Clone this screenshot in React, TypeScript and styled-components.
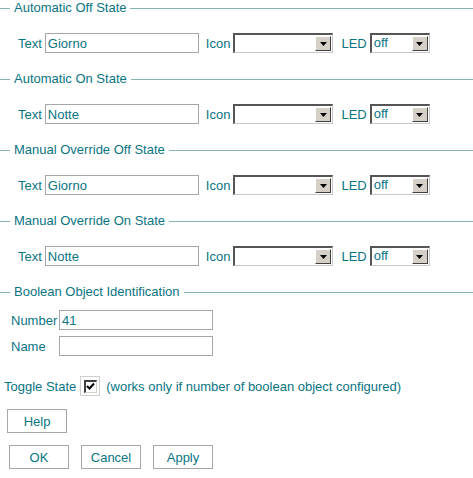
import React from 'react';
import styled, { createGlobalStyle } from 'styled-components';

const GlobalStyle = createGlobalStyle`
  html, body {
    margin: 0;
    padding: 0;
    background: #fff;
  }
  body {
    font-family: "Liberation Sans", Arial, sans-serif;
    font-size: 13px;
    color: #0a7483;
  }
`;

interface IStateGroup {
  title: string;
  text: string;
}

const stateGroups: IStateGroup[] = [
  { title: 'Automatic Off State', text: 'Giorno' },
  { title: 'Automatic On State', text: 'Notte' },
  { title: 'Manual Override Off State', text: 'Giorno' },
  { title: 'Manual Override On State', text: 'Notte' },
];

const ArrowIcon = () => (
  <svg width="7" height="4" viewBox="0 0 7 4">
    <polygon points="0,0 7,0 3.5,4" fill="#000" />
  </svg>
);

const CheckIcon = () => (
  <svg width="9" height="9" viewBox="0 0 9 9">
    <polyline points="1,4 3.5,6.5 8,1.5" fill="none" stroke="#000" strokeWidth="2" />
  </svg>
);

const FakeSelect = ({ width, value }: { width: number; value: string }) => (
  <SelectBox $width={width}>
    <SelectValue>{value}</SelectValue>
    <SelectArrow>
      <ArrowIcon />
    </SelectArrow>
  </SelectBox>
);

export default function App() {
  return (
    <Page>
      <GlobalStyle />
      {stateGroups.map((group, i) => (
        <Group key={i}>
          <Legend>{group.title}</Legend>
          <StateRow>
            <Label>Text</Label>
            <TextInput $width={154} defaultValue={group.text} />
            <Label $gapLeft={7}>Icon</Label>
            <FakeSelect width={100} value="" />
            <Label $gapLeft={8}>LED</Label>
            <FakeSelect width={60} value="off" />
          </StateRow>
        </Group>
      ))}

      <Group $top={10} $bottom={18}>
        <Legend>Boolean Object Identification</Legend>
        <IdBox>
          <IdRow>
            <IdLabel>Number</IdLabel>
            <TextInput $width={154} defaultValue="41" />
          </IdRow>
          <IdRow>
            <IdLabel>Name</IdLabel>
            <TextInput $width={154} defaultValue="" />
          </IdRow>
        </IdBox>
      </Group>

      <ToggleRow>
        <span>Toggle State</span>
        <CheckFrame>
          <CheckInner>
            <CheckIcon />
          </CheckInner>
        </CheckFrame>
        <span>(works only if number of boolean object configured)</span>
      </ToggleRow>

      <HelpRow>
        <Button>Help</Button>
      </HelpRow>

      <ButtonRow>
        <Button>OK</Button>
        <Button>Cancel</Button>
        <Button>Apply</Button>
      </ButtonRow>
    </Page>
  );
}

const Page = styled.div`
  width: 473px;
  display: flex;
  flex-direction: column;
`;

const Group = styled.fieldset<{ $top?: number; $bottom?: number }>`
  margin: 0;
  padding: ${(p) => p.$top ?? 17}px 0 ${(p) => p.$bottom ?? 18}px 0;
  border: none;
  border-top: 1px solid #86b3b3;
  min-width: 0;
`;

const Legend = styled.legend`
  margin-left: 10px;
  padding: 0 4px;
  line-height: 16px;
  font-size: 13px;
`;

const StateRow = styled.div`
  display: flex;
  align-items: center;
  padding-left: 18px;
  height: 20px;
`;

const Label = styled.span<{ $gapLeft?: number }>`
  margin-left: ${(p) => p.$gapLeft ?? 0}px;
  margin-right: 3px;
  white-space: nowrap;
`;

const TextInput = styled.input<{ $width: number }>`
  box-sizing: border-box;
  width: ${(p) => p.$width}px;
  height: 20px;
  margin: 0;
  padding: 0 2px;
  border: 1px solid #a6a6a6;
  font-family: "Liberation Sans", Arial, sans-serif;
  font-size: 13px;
  color: #0a7483;
  background: #fff;
  outline: none;
`;

const SelectBox = styled.div<{ $width: number }>`
  box-sizing: border-box;
  width: ${(p) => p.$width}px;
  height: 20px;
  display: flex;
  align-items: stretch;
  background: #fff;
  border-top: 2px solid #555;
  border-left: 2px solid #555;
  border-right: 1px solid #c8c8c8;
  border-bottom: 1px solid #c8c8c8;
`;

const SelectValue = styled.span`
  flex: 1;
  padding-left: 2px;
  line-height: 16px;
  font-size: 13px;
  color: #0a7483;
`;

const SelectArrow = styled.span`
  box-sizing: border-box;
  width: 16px;
  margin: 1px;
  display: flex;
  align-items: center;
  justify-content: center;
  background: #d4d0c8;
  border-top: 1px solid #fff;
  border-left: 1px solid #fff;
  border-right: 1px solid #404040;
  border-bottom: 1px solid #404040;
`;

const IdBox = styled.div`
  display: flex;
  flex-direction: column;
  gap: 6px;
  padding-left: 11px;
`;

const IdRow = styled.div`
  display: flex;
  align-items: center;
`;

const IdLabel = styled.span`
  width: 48px;
`;

const ToggleRow = styled.div`
  display: flex;
  align-items: center;
  gap: 4px;
  padding-left: 4px;
  margin-top: 2px;
  height: 20px;
`;

const CheckFrame = styled.span`
  box-sizing: border-box;
  width: 20px;
  height: 20px;
  display: flex;
  align-items: center;
  justify-content: center;
  border: 1px solid #cfcfcf;
  margin-right: 2px;
`;

const CheckInner = styled.span`
  box-sizing: border-box;
  width: 13px;
  height: 13px;
  display: flex;
  align-items: center;
  justify-content: center;
  background: #fff;
  border-top: 2px solid #404040;
  border-left: 2px solid #404040;
  border-right: 1px solid #d4d0c8;
  border-bottom: 1px solid #d4d0c8;
`;

const HelpRow = styled.div`
  display: flex;
  padding-left: 7px;
  margin-top: 13px;
`;

const ButtonRow = styled.div`
  display: flex;
  gap: 12px;
  padding-left: 9px;
  margin-top: 12px;
`;

const Button = styled.button`
  box-sizing: border-box;
  width: 60px;
  height: 24px;
  margin: 0;
  padding: 0;
  background: #fff;
  border: 1px solid #a6a6a6;
  font-family: "Liberation Sans", Arial, sans-serif;
  font-size: 13px;
  color: #0a7483;
`;
